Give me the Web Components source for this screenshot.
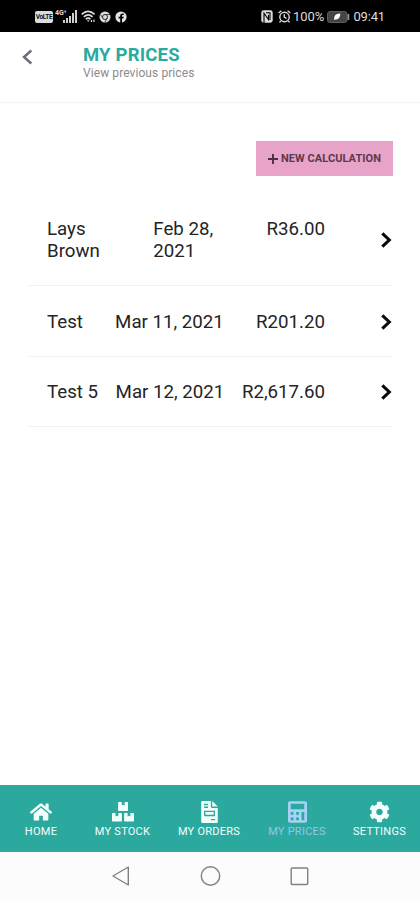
<!DOCTYPE html>
<html lang="en">
<head>
<meta charset="utf-8">
<title>My Prices</title>
<style>
html,body{margin:0;height:100%;background:#fff;font-family:Roboto,"Liberation Sans",sans-serif}
</style>
</head>
<body>
<prices-app></prices-app>
<script>
const define = (name, html) => customElements.define(name, class extends HTMLElement {
  constructor() {
    super();
    const t = document.createElement('template');
    t.innerHTML = html;
    this.attachShadow({ mode: 'open' }).append(t.content.cloneNode(true));
  }
});

define('status-bar', `
<style>
:host{display:flex;justify-content:space-between;align-items:center;box-sizing:border-box;height:32px;padding:1px 35px 0 35px;background:#000;color:#dcdcdc;font-size:13px}
.l,.r{display:flex;align-items:center}
.r span{line-height:16px}
svg{display:block}
.volte{box-sizing:border-box;width:18px;height:12px;border-radius:2px;background:#dcdcdc;color:#111;font:700 6.5px/12px Roboto,sans-serif;text-align:center;letter-spacing:-.3px}
.g{font-size:7px;line-height:7px;font-weight:700;margin:-7px -4px 0 2px;position:relative}
</style>
<div class="l">
  <div class="volte">VoLTE</div><span class="g">4G⁺</span>
  <svg width="15" height="13" viewBox="0 0 15 13" fill="#cfcfcf"><path d="M0 10h2v3H0zM3 8h2v5H3zM6 6h2v7H6zM9 3h2v10H9zM12 0h2v13h-2z"/></svg>
  <svg style="margin-left:3px" width="15" height="13" viewBox="0 0 15 13" fill="none" stroke="#dcdcdc" stroke-width="1.7"><path d="M.7 4.3Q7 -1.4 13.6 4.3M2.8 6.8Q7.2 3 11.6 6.8M4.8 9.2Q7.2 7.1 9.5 9.2"/><path d="M6 10.3h2.4L7.2 12z" fill="#dcdcdc" stroke="none"/><path d="M10.5 12v-2M13 12V9.5" stroke-width="1.2"/></svg>
  <svg style="margin-left:3px" width="12" height="12" viewBox="0 0 12 12"><circle cx="6" cy="6" r="5.5" fill="#dcdcdc"/><circle cx="6" cy="6" r="2.5" fill="none" stroke="#333" stroke-width="1"/><path d="M6 3.5h5M3.8 7.2L1.7 3.7M8.2 7.2L5.8 11.3" stroke="#333" stroke-width=".9"/></svg>
  <svg style="margin-left:4px" width="12" height="12" viewBox="0 0 12 12"><circle cx="6" cy="6" r="5.6" fill="#e2e2e2"/><path d="M5.2 12V7.4H3.6V5.7h1.6V4.6Q5.2 2.4 7.5 2.4h1.2V4H7.8Q7 4 7 4.8v.9h1.7l-.3 1.7H7V12z" fill="#000"/></svg>
</div>
<div class="r">
  <svg width="12" height="13" viewBox="0 0 12 13"><rect x=".3" y=".3" width="11.4" height="12.4" rx="2.4" fill="#dcdcdc"/><path d="M3 13V3.2L7.500 9.500V5M5 2.800l4 .1V10" fill="none" stroke="#000" stroke-width="1.1"/></svg>
  <svg style="margin-left:5px" width="13" height="13" viewBox="0 0 13 13" fill="none" stroke="#dcdcdc" stroke-width="1.4"><circle cx="6.5" cy="7" r="4.7"/><path d="M.6 3L3.4.8M12.4 3L9.6.8M6.3 4.2v3l2.3 1.3M2.7 11L1.5 12.4M10.3 11l1.2 1.4"/></svg>
  <span style="margin-left:2px;letter-spacing:0">100%</span>
  <svg style="margin-left:3px" width="23" height="12" viewBox="0 0 23 12"><rect x=".5" y=".5" width="19.5" height="11" rx="2.5" fill="#444" stroke="#5c5c5c"/><path d="M13.300 2.600Q7 2.200 7 8.800Q13.600 9 13.300 2.600z" fill="#fff"/><path d="M21.4 3v6" stroke="#999" stroke-width="1.7"/></svg>
  <span style="margin-left:3px;letter-spacing:-.15px">09:41</span>
</div>`);

define('page-header', `
<style>
:host{display:flex;box-sizing:border-box;height:71px;padding:14px 0 0 22px;border-bottom:1px solid #f3f3f3;background:#fff}
svg{display:block;margin-top:3px;width:11px;height:16px}
.t{margin-left:50px}
::slotted(h1){margin:0;font-size:18.5px;line-height:18px;font-weight:700;color:#2baa9f;letter-spacing:.18px}
::slotted(p){margin:3px 0 0;font-size:12px;line-height:13px;color:#8b8b8b;letter-spacing:.08px}
</style>
<svg viewBox="0 0 11 16" fill="none" stroke="#6d6e7c" stroke-width="2.5"><path d="M9.3 1.5L2 8l7.3 6.5"/></svg>
<div class="t"><slot></slot></div>`);

define('action-button', `
<style>
:host{display:flex;align-items:center;justify-content:center;box-sizing:border-box;width:137px;height:35px;background:#e7a3c8;color:#5b3a4c;font-size:11px;font-weight:700;white-space:nowrap;letter-spacing:.06px}
svg{display:block;margin-right:3px}
</style>
<svg width="10" height="10" viewBox="0 0 9 9" stroke="#4b303f" stroke-width="1.7"><path d="M4.5 0v9M0 4.5h9"/></svg><slot></slot>`);

define('price-row', `
<style>
:host{display:flex;align-items:center;box-sizing:border-box;padding:24.3px 0 23px 19px;border-bottom:1px solid #f2f2f2;color:#242424;font-size:18.7px;line-height:22px}
.c{display:flex;justify-content:space-between;width:278.500px;white-space:pre}
svg{display:block;margin-left:56px}
</style>
<div class="c"><slot name="name"></slot><slot name="date"></slot><slot name="price"></slot></div>
<svg width="11" height="16" viewBox="0 0 11 16" fill="none" stroke="#0b0b0b" stroke-width="3.1"><path d="M1.3 1.300L8.300 8l-7 6.700"/></svg>`);

define('tab-item', `
<style>
:host{display:flex;flex-direction:column;align-items:center;color:#f2fffd;font-size:11px;line-height:13px;white-space:nowrap;letter-spacing:.25px}
:host([active]){color:#94c5eb}
.i{height:22px;display:flex;align-items:center;margin-bottom:2px}
</style>
<div class="i"><slot name="icon"></slot></div><slot></slot>`);

define('tab-bar', `
<style>
:host{display:grid;grid-template-columns:82px 81px 92px 84px 81px;box-sizing:border-box;height:67px;padding-top:16px;background:#2ca99e}
svg{display:block;fill:currentColor}
</style>
<tab-item><svg slot="icon" width="22" height="20" viewBox="0 0 576 512"><path d="M280.37 148.26L96 300.11V464a16 16 0 0 0 16 16l112.06-.29a16 16 0 0 0 15.92-16V368a16 16 0 0 1 16-16h64a16 16 0 0 1 16 16v95.64a16 16 0 0 0 16 16.05L464 480a16 16 0 0 0 16-16V300L295.67 148.26a12.19 12.19 0 0 0-15.3 0zM571.6 251.47L488 182.56V44.05a12 12 0 0 0-12-12h-56a12 12 0 0 0-12 12v72.61L318.47 43a48 48 0 0 0-61 0L4.34 251.47a12 12 0 0 0-1.6 16.9l25.5 31A12 12 0 0 0 45.15 301l235.22-193.74a12.19 12.19 0 0 1 15.3 0L530.9 301a12 12 0 0 0 16.9-1.6l25.5-31a12 12 0 0 0-1.7-16.93z"/></svg>HOME</tab-item>
<tab-item><svg slot="icon" width="22" height="20" viewBox="0 0 22 20"><path d="M7 0h2.800v3.500l1.400-.8 1.400.8V0h2.700q.7 0 .7.7v7.600q0 .7-.7.7H6.800q-.7 0-.7-.7V.7Q6.100 0 6.800 0zM.7 11h2.800v3.500l1.400-.8 1.400.8V11h2.900q.7 0 .7.7v7.100q0 .7-.7.7H.7q-.7 0-.7-.7v-7.100Q0 11 .7 11zM12.800 11h2.800v3.500l1.400-.8 1.400.8V11h2.900q.7 0 .7.7v7.100q0 .7-.7.7h-8.500q-.7 0-.7-.7v-7.100q0-.7.7-.7z"/></svg>MY STOCK</tab-item>
<tab-item><svg slot="icon" width="17" height="22" viewBox="0 0 384 512"><path fill-rule="evenodd" d="M24 0h200v136q0 24 24 24h136v328q0 24-24 24H24q-24 0-24-24V24Q0 0 24 0zM256 0l128 128H256zM64 64v32h96V64zM64 128v32h96v-32zM64 224v128h256V224zM96 256h192v64H96zM224 416v32h96v-32z"/></svg>MY ORDERS</tab-item>
<tab-item active><svg slot="icon" width="19" height="22" viewBox="0 0 448 512"><path fill="#a9d0f5" fill-rule="evenodd" d="M48 0h352q48 0 48 48v416q0 48-48 48H48q-48 0-48-48V48Q0 0 48 0zM64 64v128h320V64zM64 256v64h64v-64zM192 256v64h64v-64zM320 256v192h64V256zM64 384v64h64v-64zM192 384v64h64v-64z"/></svg>MY PRICES</tab-item>
<tab-item><svg slot="icon" width="21" height="22" viewBox="0 0 512 512"><path d="M487.4 315.7l-42.6-24.6c4.3-23.2 4.3-47 0-70.2l42.6-24.6c4.9-2.8 7.1-8.6 5.5-14-11.1-35.6-30-67.8-54.7-94.6-3.8-4.1-10-5.1-14.8-2.3L380.8 110c-17.9-15.4-38.5-27.3-60.8-35.1V25.8c0-5.6-3.9-10.5-9.4-11.7-36.7-8.2-74.3-7.8-109.2 0-5.5 1.2-9.4 6.1-9.4 11.7V75c-22.2 7.9-42.8 19.8-60.8 35.1L88.7 85.5c-4.9-2.8-11-1.9-14.8 2.3-24.7 26.7-43.6 58.9-54.7 94.6-1.7 5.4.6 11.2 5.5 14L67.3 221c-4.3 23.2-4.3 47 0 70.2l-42.6 24.6c-4.9 2.8-7.1 8.6-5.5 14 11.1 35.6 30 67.8 54.7 94.6 3.8 4.1 10 5.1 14.8 2.3l42.6-24.6c17.9 15.4 38.5 27.3 60.8 35.1v49.2c0 5.6 3.9 10.5 9.4 11.7 36.7 8.2 74.3 7.8 109.2 0 5.5-1.2 9.4-6.1 9.4-11.7v-49.2c22.2-7.9 42.8-19.8 60.8-35.1l42.6 24.6c4.9 2.8 11 1.9 14.8-2.3 24.7-26.7 43.6-58.9 54.7-94.6 1.5-5.5-.7-11.3-5.6-14.1zM256 336c-44.1 0-80-35.9-80-80s35.9-80 80-80 80 35.9 80 80-35.9 80-80 80z"/></svg>SETTINGS</tab-item>`);

define('system-bar', `
<style>
:host{display:flex;align-items:center;box-sizing:border-box;height:48px;padding:0 0 0 112px;background:#fcfcfc}
svg{display:block;fill:none;stroke:#808080;stroke-width:1.4}
</style>
<svg width="18" height="20" viewBox="0 0 18 20"><path d="M16.3 1v18L1 10z" stroke-linejoin="round"/></svg>
<svg style="margin-left:70px" width="21" height="20" viewBox="0 0 21 20"><circle cx="10.5" cy="10" r="9.2"/></svg>
<svg style="margin-left:69px" width="19" height="19" viewBox="0 0 19 19"><rect x="1.2" y="1" width="16.5" height="16.5" rx="1"/></svg>`);

define('prices-app', `
<style>
:host{display:flex;flex-direction:column;height:900px;width:420px;background:#fff;overflow:hidden}
main{flex:1;padding:38px 28px 0 28px;display:flex;flex-direction:column}
action-button{align-self:flex-end;margin-right:-1px}
.list{margin-top:18px}
</style>
<status-bar></status-bar>
<page-header><h1>MY PRICES</h1><p>View previous prices</p></page-header>
<main>
  <action-button>NEW CALCULATION</action-button>
  <div class="list">
    <price-row><span slot="name">Lays
Brown</span><span slot="date">Feb 28,
2021 </span><span slot="price">R36.00</span></price-row>
    <price-row><span slot="name">Test</span><span slot="date">Mar 11, 2021</span><span slot="price">R201.20</span></price-row>
    <price-row><span slot="name">Test 5</span><span slot="date">Mar 12, 2021</span><span slot="price">R2,617.60</span></price-row>
  </div>
</main>
<tab-bar></tab-bar>
<system-bar></system-bar>`);
</script>
</body>
</html>
